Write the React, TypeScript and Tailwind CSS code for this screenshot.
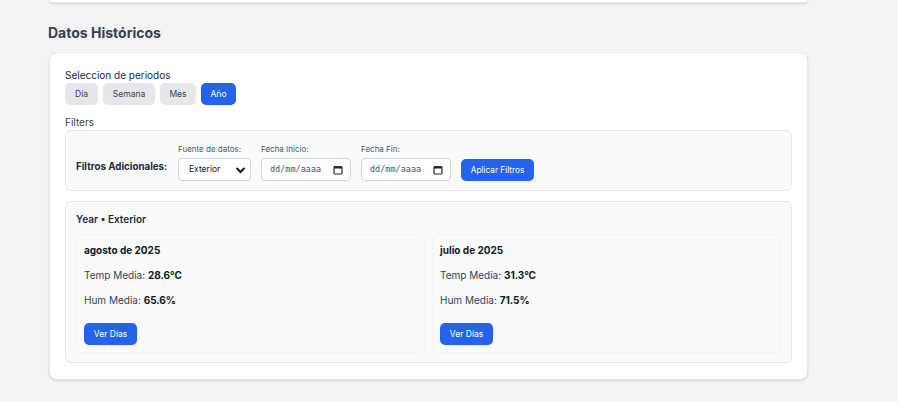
import React, { useState } from 'react';

const font = { fontFamily: 'Inter, "Noto Sans", sans-serif' };

const periods = [
  { label: 'Día', w: 'w-[33px]' },
  { label: 'Semana', w: 'w-[52px]' },
  { label: 'Mes', w: 'w-[36px]' },
  { label: 'Año', w: 'w-[35px]' },
];

const months = [
  { name: 'agosto de 2025', temp: '28.6°C', hum: '65.6%' },
  { name: 'julio de 2025', temp: '31.3°C', hum: '71.5%' },
];

const DateField: React.FC = () => (
  <div className="flex h-[23px] w-[90px] items-center justify-between rounded-[4px] border border-gray-300 bg-white pl-[8px] pr-[7px]">
    <span className="text-[8.5px] text-gray-600" style={{ fontFamily: '"DejaVu Sans Mono", monospace' }}>
      dd/mm/aaaa
    </span>
    <svg width="10" height="10" viewBox="0 0 10 10" fill="none">
      <rect x="1" y="1.5" width="8" height="7.5" rx="1" stroke="#1f2937" strokeWidth="1.2" />
      <rect x="1" y="1.5" width="8" height="2" fill="#1f2937" />
    </svg>
  </div>
);

export default function App() {
  const [period, setPeriod] = useState('Año');

  return (
    <div className="min-h-screen w-full bg-[#f3f4f6] text-gray-800" style={font}>
      <div className="ml-[49px] h-[3px] w-[759px] rounded-b-lg border-x border-b border-gray-200 bg-white shadow-sm" />

      <h2 className="ml-[48px] mt-[21px] text-[14px] leading-[17px] font-bold text-gray-700">Datos Históricos</h2>

      <div className="ml-[49px] mt-[11px] w-[759px] rounded-lg border border-gray-200 bg-white px-[15px] pt-[15px] pb-[16px] shadow-sm">
        <p className="text-[10px] leading-[14px] text-gray-800">Seleccion de periodos</p>
        <div className="mt-[1px] flex gap-[5px]">
          {periods.map(p => (
            <button
              key={p.label}
              onClick={() => setPeriod(p.label)}
              className={`h-[22px] ${p.w} rounded-[5px] text-[8.5px] ${
                p.label === period ? 'bg-[#2563eb] text-white' : 'bg-gray-200 text-gray-700'
              }`}
            >
              {p.label}
            </button>
          ))}
        </div>

        <p className="mt-[10px] text-[10px] leading-[14px] text-gray-700">Filters</p>
        <div className="mt-[1px] flex h-[61px] items-end gap-[10px] rounded-md border border-gray-200 bg-gray-50 px-[10px] pb-[9px]">
          <span className="mb-[6px] w-[92px] text-[9.75px] font-bold text-gray-800">Filtros Adicionales:</span>
          <div className="flex flex-col gap-[3px]">
            <label className="text-[8px] leading-[12px] text-gray-600">Fuente de datos:</label>
            <div className="flex h-[23px] w-[73px] items-center justify-between rounded-[4px] border border-gray-300 bg-white pl-[10px] pr-[4px]">
              <span className="text-[8.5px] text-gray-900">Exterior</span>
              <svg width="11" height="8" viewBox="0 0 11 8" fill="none">
                <path d="M1.5 2l4 4 4-4" stroke="#111827" strokeWidth="2" />
              </svg>
            </div>
          </div>
          <div className="flex flex-col gap-[3px]">
            <label className="text-[8px] leading-[12px] text-gray-600">Fecha Inicio:</label>
            <DateField />
          </div>
          <div className="flex flex-col gap-[3px]">
            <label className="text-[8px] leading-[12px] text-gray-600">Fecha Fin:</label>
            <DateField />
          </div>
          <button className="h-[22px] w-[73px] rounded-[5px] bg-[#2563eb] text-[8.25px] text-white">Aplicar Filtros</button>
        </div>

        <div className="mt-[10px] rounded-md border border-gray-200 bg-gray-50 px-[10px] pt-[10px] pb-[9px]">
          <p className="text-[10px] leading-[14px] font-semibold text-gray-800">Year • Exterior</p>
          <div className="mt-[8px] grid grid-cols-2 gap-[7px]">
            {months.map(m => (
              <div key={m.name} className="rounded-md border border-gray-100 bg-gray-50 px-[7px] pt-[8px] pb-[7px]">
                <p className="text-[10px] leading-[14px] font-bold text-gray-900">{m.name}</p>
                <p className="mt-[11px] text-[10px] leading-[14px] text-gray-700">
                  Temp Media: <span className="font-bold text-gray-900">{m.temp}</span>
                </p>
                <p className="mt-[11px] text-[10px] leading-[14px] text-gray-700">
                  Hum Media: <span className="font-bold text-gray-900">{m.hum}</span>
                </p>
                <button className="mt-[16px] h-[22px] w-[53px] rounded-[5px] bg-[#2563eb] text-[8.5px] text-white">Ver Días</button>
              </div>
            ))}
          </div>
        </div>
      </div>
    </div>
  );
}
